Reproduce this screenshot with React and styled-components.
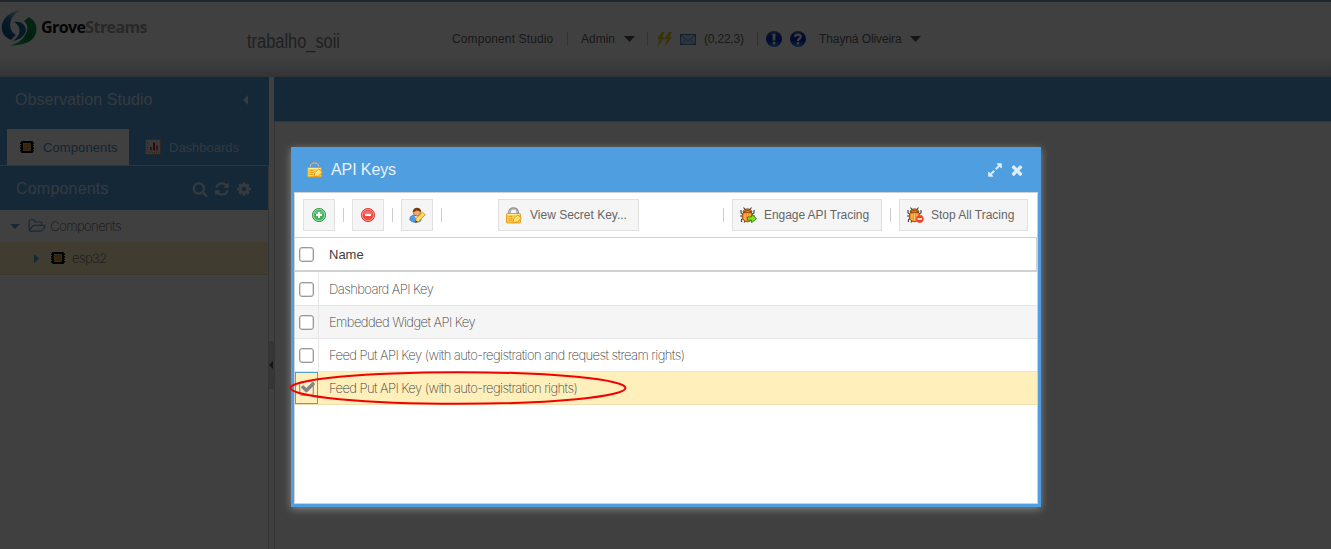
import React from "react";
import styled, { createGlobalStyle } from "styled-components";

const Global = createGlobalStyle`
  * { box-sizing: border-box; }
  body { margin: 0; background: #fff; font-family: "Liberation Sans", Arial, sans-serif; overflow: hidden; }
  svg { display: block; flex: none; }
`;

const Page = styled.div`
  position: relative;
  width: 1331px;
  height: 549px;
  display: flex;
  flex-direction: column;
  overflow: hidden;
  background: #fff;
`;
const TopBar = styled.header`
  height: 77px;
  flex: none;
  display: flex;
  align-items: flex-start;
  border-top: 2px solid #7aa0b8;
  background: linear-gradient(#fff 0, #fff 55px, #e4e6ec 66px, #c6cad6 75px);
`;
const Label = styled.span`
  display: block;
  flex: none;
  white-space: nowrap;
  width: ${(p) => p.$w}px;
  font-size: ${(p) => p.$size || 12}px;
  letter-spacing: ${(p) => p.$ls || 0}px;
  color: ${(p) => p.$color || "#666"};
  margin-left: ${(p) => p.$ml || 0}px;
`;
const Brand = styled.div`
  display: flex;
  width: 247px;
  padding: 5px 0 0 1px;
`;
const BrandName = styled.div`
  margin: 8px 0 0 4px;
  font: bold 16px/24px "Open Sans", sans-serif;
  letter-spacing: -0.6px;
  color: #111;
  span { color: #a0a0a0; }
`;
const OrgName = styled.div`
  width: 205px;
  padding-top: 28px;
  font-size: 20px;
  line-height: 23px;
  color: #808080;
  transform: scaleX(0.82);
  transform-origin: 0 0;
`;
const Nav = styled.nav`
  display: flex;
  align-items: center;
  height: 20px;
  margin-top: 27px;
`;
const Divider = styled.i`
  flex: none;
  width: 1px;
  height: 14px;
  background: #ccc;
  margin: 0 ${(p) => p.$r || 8}px 0 ${(p) => p.$l || 8}px;
`;
const Body = styled.div`
  flex: 1;
  display: flex;
`;
const Side = styled.aside`
  width: 269px;
  flex: none;
  border-right: 1px solid #cfcfcf;
`;
const StudioHead = styled.div`
  height: 52px;
  width: 269px;
  padding: 0 21px 6px 15px;
  display: flex;
  align-items: center;
  justify-content: space-between;
  background: #4f9ee0;
`;
const Tabs = styled.div`
  display: flex;
  width: 269px;
  height: 37px;
  padding-left: 7px;
  background: #4f9ee0;
  border-bottom: 1px solid #d0d0d0;
`;
const Tab = styled.div`
  display: flex;
  align-items: center;
  height: 36px;
  width: ${(p) => p.$w}px;
  padding-left: ${(p) => p.$pl}px;
  gap: 8px;
  background: ${(p) => (p.$active ? "#fff" : "transparent")};
`;
const PanelHead = styled.div`
  display: flex;
  align-items: center;
  height: 44px;
  padding: 1px 16px 0;
  background: #4f9ee0;
  gap: 6px;
`;
const TreeRow = styled.div`
  display: flex;
  align-items: center;
  height: ${(p) => p.$h}px;
  padding: 0 0 0 ${(p) => p.$pl}px;
  background: ${(p) => (p.$selected ? "#ffefbb" : "#fff")};
  border-bottom: ${(p) => (p.$selected ? "1px solid #e9dcae" : "0")};
`;
const Splitter = styled.div`
  width: 5px;
  flex: none;
  display: flex;
  align-items: center;
  padding-top: 104px;
  height: 472px;
`;
const SplitGrip = styled.div`
  width: 5px;
  height: 48px;
  display: flex;
  align-items: center;
  background: #d8d8d8;
`;
const Main = styled.main`
  flex: 1;
  border-left: 1px solid #cfcfcf;
`;
const MainHead = styled.div`
  height: 45px;
  margin-left: -1px;
  background: #4f9ee0;
  border-bottom: 1px solid #cfcfcf;
`;
const Mask = styled.div`
  position: absolute;
  inset: 0;
  background: rgba(0, 0, 0, 0.75);
`;
const Dialog = styled.section`
  position: absolute;
  left: 291px;
  top: 147px;
  width: 750px;
  height: 360px;
  display: flex;
  flex-direction: column;
  padding: 0 3px 3px;
  background: #4f9ee0;
  box-shadow: 0 2px 8px #888;
`;
const DialogHead = styled.div`
  display: flex;
  align-items: center;
  height: 45px;
  padding: 0 14px 0 13px;
  flex: none;
`;
const DialogBody = styled.div`
  flex: 1;
  background: #fff;
  border: 1px solid #d0d0d0;
`;
const Toolbar = styled.div`
  display: flex;
  align-items: center;
  height: 45px;
  padding-left: 8px;
  border-bottom: 1px solid #d0d0d0;
`;
const Button = styled.div`
  display: flex;
  flex: none;
  align-items: center;
  height: 32px;
  width: ${(p) => p.$w || 32}px;
  padding-left: 7px;
  gap: 7px;
  background: #f5f5f5;
  border: 1px solid #e0e0e0;
`;
const Gap = styled.div`
  flex: none;
  width: ${(p) => p.$w}px;
`;
const GridHead = styled.div`
  display: flex;
  align-items: center;
  height: 34px;
  padding: 1px 0 0 4px;
  border-right: 1px solid #d0d0d0;
  border-bottom: 2px solid #d0d0d0;
`;
const GridRows = styled.div`
  padding-top: 1px;
`;
const GridRow = styled.div`
  display: flex;
  height: 33px;
  background: ${(p) => p.$bg};
  border-bottom: 1px solid ${(p) => (p.$on ? "#eedfae" : "#e6e6e6")};
`;
const CheckCell = styled.div`
  width: ${(p) => (p.$on ? 23 : 24)}px;
  margin-right: ${(p) => (p.$on ? 1 : 0)}px;
  flex: none;
  display: flex;
  align-items: center;
  padding-left: ${(p) => (p.$on ? 3 : 4)}px;
  border: 1px solid transparent;
  border-width: ${(p) => (p.$on ? "1px" : "0 1px 0 0")};
  border-color: ${(p) => (p.$on ? "#4f9ee0" : "#e6e6e6")};
`;
const NameCell = styled.div`
  display: flex;
  align-items: center;
  padding-left: 10px;
`;
const Box = styled.div`
  flex: none;
  width: 15px;
  height: 15px;
  border: 1.5px solid #9a9a9a;
  box-shadow: inset 0 0 0 0.5px #b8b8b8;
  border-radius: 3px;
  background: ${(p) => (p.$on ? "transparent" : "#fff")};
`;
const Annotation = styled.svg`
  position: absolute;
  left: 286px;
  top: 368px;
`;

const GLYPHS = {
  search: "M1216 832q0-185-131.5-316.5t-316.5-131.5-316.5 131.5-131.5 316.5 131.5 316.5 316.5 131.5 316.5-131.5 131.5-316.5zm512 832q0 52-38 90t-90 38q-54 0-90-38l-343-342q-179 124-399 124-143 0-273.5-55.5t-225-150-150-225-55.5-273.5 55.5-273.5 150-225 225-150 273.5-55.5 273.5 55.5 225 150 150 225 55.5 273.5q0 220-124 399l343 343q37 37 37 90z",
  refresh: "M1639 1056q0 5-1 7-64 268-268 434.5t-478 166.5q-146 0-282.5-55t-243.5-157l-129 129q-19 19-45 19t-45-19-19-45v-448q0-26 19-45t45-19h448q26 0 45 19t19 45-19 45l-137 137q71 66 161 102t187 36q134 0 250-65t186-179q11-17 53-117 8-23 30-23h192q13 0 22.5 9.5t9.5 22.5zm25-800v448q0 26-19 45t-45 19h-448q-26 0-45-19t-19-45 19-45l138-138q-148-137-349-137-134 0-250 65t-186 179q-11 17-53 117-8 23-30 23h-199q-13 0-22.5-9.5t-9.5-22.5v-7q65-268 270-434.5t480-166.5q146 0 284 55.5t245 156.5l130-129q19-19 45-19t45 19 19 45z",
  cog: "M1152 896q0-106-75-181t-181-75-181 75-75 181 75 181 181 75 181-75 75-181zm512-109v222q0 12-8 23t-20 13l-185 28q-19 54-39 91 35 50 107 138 10 12 10 25t-9 23q-27 37-99 108t-94 71q-12 0-26-9l-138-108q-44 23-91 38-16 136-29 186-7 28-36 28h-222q-14 0-24.5-8.5t-11.5-21.5l-28-184q-49-16-90-37l-141 107q-10 9-25 9-14 0-25-11-126-114-165-168-7-10-7-23 0-12 8-23 15-21 51-66.5t54-70.5q-27-50-41-99l-183-27q-13-2-21-12.5t-8-23.5v-222q0-12 8-23t19-13l186-28q14-46 39-92-40-57-107-138-10-12-10-24 0-10 9-23 26-36 98.5-107.5t94.5-71.5q13 0 26 10l138 107q44-23 91-38 16-136 29-186 7-28 36-28h222q14 0 24.5 8.5t11.5 21.5l28 184q49 16 90 37l142-107q9-9 24-9 13 0 25 10 129 119 165 170 7 8 7 22 0 12-8 23-15 21-51 66.5t-54 70.5q26 50 41 98l183 28q13 2 21 12.5t8 23.5z",
  folder: "M1845 931q0-35-53-35h-1088q-40 0-85.5 21.5t-71.5 52.5l-294 363q-18 24-18 40 0 35 53 35h1088q40 0 86-22t71-53l294-363q18-22 18-39zm-1141-163h768v-160q0-40-28-68t-68-28h-576q-40 0-68-28t-28-68v-64q0-40-28-68t-68-28h-320q-40 0-68 28t-28 68v853l256-315q44-53 116-87.5t140-34.5zm1269 163q0 62-46 120l-295 363q-43 53-116 87.5t-140 34.5h-1088q-92 0-158-66t-66-158v-960q0-92 66-158t158-66h320q92 0 158 66t66 158v32h544q92 0 158 66t66 158v160h192q54 0 99 24.5t67 70.5q15 32 15 68z",
  expand: "M883 1056q0 13-10 23l-332 332 144 144q19 19 19 45t-19 45-45 19h-448q-26 0-45-19t-19-45v-448q0-26 19-45t45-19 45 19l144 144 332-332q10-10 23-10t23 10l114 114q10 10 10 23zm781-864v448q0 26-19 45t-45 19-45-19l-144-144-332 332q-10 10-23 10t-23-10l-114-114q-10-10-10-23t10-23l332-332-144-144q-19-19-19-45t19-45 45-19h448q26 0 45 19t19 45z",
  close: "M1490 1322q0 40-28 68l-136 136q-28 28-68 28t-68-28l-294-294-294 294q-28 28-68 28t-68-28l-136-136q-28-28-28-68t28-68l294-294-294-294q-28-28-28-68t28-68l136-136q28-28 68-28t68 28l294 294 294-294q28-28 68-28t68 28l136 136q28 28 28 68t-28 68l-294 294 294 294q28 28 28 68z",
  check: "M1671 566q0 40-28 68l-724 724-136 136q-28 28-68 28t-68-28l-136-136-362-362q-28-28-28-68t28-68l136-136q28-28 68-28t68 28l294 295 656-657q28-28 68-28t68 28l136 136q28 28 28 68z",
};
const Glyph = ({ name, size = 16, color, wide }) => (
  <svg width={wide ? (size * 2048) / 1792 : size} height={size} viewBox={`0 0 ${wide ? 2048 : 1792} 1792`} fill={color}>
    <path d={GLYPHS[name]} />
  </svg>
);
const Pointer = ({ w, h, dir, color }) => {
  const pts = { down: `0,0 ${w},0 ${w / 2},${h}`, left: `${w},0 ${w},${h} 0,${h / 2}`, right: `0,0 ${w},${h / 2} 0,${h}` }[dir];
  return <svg width={w} height={h} fill={color}><polygon points={pts} /></svg>;
};

const Logo = () => (
  <svg width="36" height="42" viewBox="0 0 36 42">
    <defs>
      <linearGradient id="lb" x1="0" y1="1" x2=".8" y2="0"><stop offset="0" stopColor="#0a3f78" /><stop offset=".5" stopColor="#1a70a8" /><stop offset=".8" stopColor="#8fb8cf" /><stop offset="1" stopColor="#fff" /></linearGradient>
      <linearGradient id="lg" x1="0" y1="1" x2=".7" y2="0"><stop offset="0" stopColor="#3cc86a" /><stop offset=".5" stopColor="#00803c" /><stop offset="1" stopColor="#109a50" /></linearGradient>
    </defs>
    <path d="M25 2C11 3 .8 10 .8 21c0 5 3 9 9 12l5-5C10 25 8.500 20 9.500 15 11 9 16 4 25 2z" fill="url(#lb)" />
    <path d="M13 15c4-1 8 0 10 3 3 4 2 8-1 11-3 3-6 4-10 5 5-4 7-7 6.500-11-.5-4-2.500-6-5.500-8z" fill="#17689a" />
    <path d="M23 14l5-4c5 3 7.500 7 7.500 12 0 10-9 17-27 16.500 7-2 12-4.500 15-9.500 4-6 4-11-.5-15z" fill="url(#lg)" />
  </svg>
);
const Bolts = () => (
  <svg width="15" height="14" viewBox="0 0 15 14" fill="#e6d200" stroke="#b8a600" strokeWidth=".4">
    <path d="M4.800.3L.6 6.800h2.700L.9 13.600 7.300 5.600H4.800L7.200.3z" />
    <path d="M12 .3L7.800 6.800h2.700l-2.400 6.800 6.500-8H12L14.400.3z" />
  </svg>
);
const Mail = () => (
  <svg width="16" height="11" viewBox="0 0 16 11" fill="#b9d4f1" stroke="#4d83bb">
    <rect x=".5" y=".5" width="15" height="10" /><path d="M1 1l7 6 7-6M1 10l5-4.500M15 10l-5-4.500" fill="none" strokeWidth=".8" />
  </svg>
);
const Info = ({ kind }) => (
  <svg width="16" height="16" viewBox="0 0 16 16">
    <defs><linearGradient id="inf" x2="0" y2="1"><stop stopColor="#5068b8" /><stop offset=".3" stopColor="#1538b0" /><stop offset=".6" stopColor="#0a2fc0" /><stop offset="1" stopColor="#3f8cf0" /></linearGradient></defs>
    <circle cx="8" cy="8" r="8" fill="url(#inf)" />
    {kind === "alert"
      ? <path d="M6.400 2.800h3.200L9.200 9.600H6.800zM6.700 10.800h2.600v2.600H6.700z" fill="#fff" />
      : <g fill="none" stroke="#fff" strokeWidth="2.300"><path d="M5.200 5.900C5.300 2.900 10.800 2.900 10.700 5.800 10.600 7.500 8 7.700 8 10" /><path d="M8 11.100v2.300" /></g>}
  </svg>
);
const Chip = () => (
  <svg width="14" height="12" viewBox="0 0 14 12">
    <rect x="1" y="0" width="12" height="12" rx="1" fill="#000" /><path d="M.5 1.500v9.500M13.500 1.500v9.500" stroke="#000" strokeDasharray="1.500 1" />
    <rect x="3.500" y="2.500" width="7" height="7" fill="#d98f38" stroke="#f2c98d" strokeWidth=".8" />
  </svg>
);
const ChartIcon = () => (
  <svg width="16" height="16" viewBox="0 0 16 16">
    <rect x=".5" y=".5" width="15" height="15" fill="#e6e4e6" stroke="#a99a94" />
    <path d="M2.500 2v11.500H14" stroke="#a89c9c" fill="none" strokeDasharray="1 1" />
    <path d="M5 11.500V8h1.500v3.500zM8 11.500V3.500h2v8zM11.200 11.500V6.500h1.500v5z" fill="#c81c2c" />
  </svg>
);
const LockIcon = () => (
  <svg width="16" height="17" viewBox="0 0 16 17">
    <path d="M3.300 7.500V5.500C3.300 0 11.800 0 11.800 5.500v2" fill="none" stroke="#8c8c8c" strokeWidth="2.400" />
    <path d="M3.300 7V5.500C3.300.700 11.500.700 11.800 5.500" fill="none" stroke="#d0d0d0" strokeWidth=".8" />
    <rect x=".6" y="6.600" width="13.800" height="9.300" rx=".6" fill="#fbd04b" stroke="#e39a19" />
    <path d="M1.500 7.500h12" stroke="#ffed96" /><path d="M2.500 9.500h4M2.500 11.500h4M2.500 13.500h4" stroke="#e2a125" strokeWidth=".9" />
    <path d="M7 15.700l.8-4 4-3.700 3.700 3.200-4 3.800z" fill="#ffe267" stroke="#d88b15" strokeWidth=".8" /><path d="M8.800 12l3-2.700" stroke="#fff5bd" />
  </svg>
);
const RoundIcon = ({ add }) => (
  <svg width="16" height="16" viewBox="0 0 16 16">
    <circle cx="8" cy="8" r="6.600" fill={add ? "#43b45c" : "#f2483f"} stroke={add ? "#2d9447" : "#cf3935"} strokeWidth=".9" />
    <circle cx="8" cy="8" r="5.700" fill="none" stroke={add ? "#a8e6b2" : "#ffaaa2"} strokeWidth=".8" />
    <path d="M3.500 7C4 2.700 12 2.700 12.500 7z" fill="#fff" opacity=".22" />
    <path d={add ? "M8 5v6M5 8h6" : "M5 8h6"} stroke="#fff" strokeWidth="2" />
  </svg>
);
const UserEdit = () => (
  <svg width="17" height="16" viewBox="0 0 17 16">
    <path d="M.8 13c0-4 2-5 6-5s6 2 5 6c-3 2-8 2-11-1z" fill="#4d9be8" stroke="#2c69b0" strokeWidth=".6" />
    <path d="M5.500 9l3 5 2-5z" fill="#e8f4ff" />
    <circle cx="8" cy="5.300" r="3.800" fill="#f0aa68" stroke="#8b4a1c" strokeWidth=".6" />
    <path d="M3.700 5C4-.8 12-.8 12.300 5 10 4.500 9 3.500 7.500 3.500 6 4.500 5 5 3.700 5z" fill="#7a3c13" />
    <path d="M6 15.500l1-4 6.500-6.300 2.800 2.500-6.500 6.800z" fill="#ffdb57" stroke="#bd7a14" strokeWidth=".7" /><path d="M6 15.500l.7-2.400 2 1.900z" fill="#5b3820" />
  </svg>
);
const BugIcon = ({ stop }) => (
  <svg width="17" height="16" viewBox="0 0 17 16">
    <path d="M3.500.5L5.500 3M11.500.5L9.500 3M1 3v3l3 1.500M14 3v3l-3 1.500M0 9H4M15 9H11M4 11l-2.500 1.500V15M5 14l-1 1.500" fill="none" stroke="#3b4a55" strokeWidth="1.200" />
    <path d="M3 5C3.500.8 11.500.8 12 5z" fill="#d87018" stroke="#6c3510" strokeWidth=".7" />
    <ellipse cx="7.500" cy="9.200" rx="5.400" ry="5.600" fill="#f58a1f" stroke="#7d3a0c" strokeWidth=".8" />
    <path d="M3 5.500h9" stroke="#7d3a0c" strokeWidth=".7" />
    <path d="M7.500 6.500v7M5 7v6M10 7v6" stroke="#ffd27a" strokeWidth=".9" />
    {stop
      ? <g><circle cx="12.800" cy="12" r="3.700" fill="#ef3f28" stroke="#e06a50" strokeWidth=".6" /><path d="M10.600 12h4.400" stroke="#fff" strokeWidth="1.500" /></g>
      : <path d="M7.500 9.900h4V7.400l5 4.200-5 4.100v-2.500h-4z" fill="#7be32a" stroke="#26840d" strokeWidth=".9" />}
  </svg>
);

const KeyText = styled(Label)`
  font-family: Inter, "Liberation Sans", sans-serif;
  font-weight: 200;
  letter-spacing: -0.57px;
`;

const KEYS = [
  { name: "Dashboard API Key", bg: "#fff", w: 106 },
  { name: "Embedded Widget API Key", bg: "#f5f5f5", w: 148 },
  { name: "Feed Put API Key (with auto-registration and request stream rights)", bg: "#fff", w: 356 },
  { name: "Feed Put API Key (with auto-registration rights)", bg: "#ffefbb", w: 248, on: true },
];
const CheckMark = styled.div`
  margin-left: -14px;
  margin-top: -3px;
`;

export default function App() {
  return (
    <Page>
      <Global />
      <TopBar>
        <Brand><Logo /><BrandName>Grove<span>Streams</span></BrandName></Brand>
        <OrgName>trabalho_soii</OrgName>
        <Nav>
          <Label $w={102} $ls={0.12}>Component Studio</Label>
          <Divider $l={13} $r={13} />
          <Label $w={43}>Admin</Label>
          <Pointer w={11} h={6} dir="down" color="#555" />
          <Divider $l={12} $r={9} />
          <Bolts /><Gap $w={8} /><Mail />
          <Label $w={40} $ml={8} $ls={-0.2}>(0,22,3)</Label>
          <Divider $l={13} $r={8} />
          <Info kind="alert" /><Gap $w={8} /><Info kind="help" />
          <Label $w={91} $ml={13} $ls={-0.1}>Thayná Oliveira</Label>
          <Pointer w={11} h={6} dir="down" color="#555" />
        </Nav>
      </TopBar>
      <Body>
        <Side>
          <StudioHead>
            <Label $w={140} $size={16} $ls={0.08} $color="#d3e5f6">Observation Studio</Label>
            <Pointer w={5} h={10} dir="left" color="#d3e5f6" />
          </StudioHead>
          <Tabs>
            <Tab $active $w={122} $pl={13}><Chip /><Label $w={76} $size={13} $ls={0.1} $color="#4f90c8" $ml={1}>Components</Label></Tab>
            <Tab $w={130} $pl={16}><ChartIcon /><Label $w={72} $size={13} $color="#c5dff5">Dashboards</Label></Tab>
          </Tabs>
          <PanelHead>
            <Label $w={170} $size={16} $ls={0.2} $color="#d3e5f6">Components</Label>
            <Glyph name="search" color="#d3e5f6" /><Glyph name="refresh" color="#d3e5f6" /><Glyph name="cog" color="#d3e5f6" />
          </PanelHead>
          <TreeRow $h={32} $pl={10}>
            <Pointer w={10} h={5} dir="down" color="#4f9ee0" /><Gap $w={8} />
            <Glyph name="folder" wide color="#4f9ee0" />
            <KeyText $size={13} $color="#555" $ml={4} $w={72}>Components</KeyText>
          </TreeRow>
          <TreeRow $h={33} $pl={34} $selected>
            <Pointer w={5} h={9} dir="right" color="#4f9ee0" /><Gap $w={12} /><Chip />
            <KeyText $size={13} $color="#555" $ml={7} $w={36}>esp32</KeyText>
          </TreeRow>
        </Side>
        <Splitter><SplitGrip><Pointer w={4} h={8} dir="left" color="#555" /></SplitGrip></Splitter>
        <Main><MainHead /></Main>
      </Body>
      <Mask />
      <Dialog>
        <DialogHead>
          <LockIcon />
          <Label $w={656} $size={16} $ls={-0.1} $color="#e8f2fb" $ml={8}>API Keys</Label>
          <Glyph name="expand" color="#dcecf9" /><Gap $w={6} /><Glyph name="close" color="#dcecf9" />
        </DialogHead>
        <DialogBody>
          <Toolbar>
            <Button><RoundIcon add /></Button>
            <Divider />
            <Button><RoundIcon /></Button>
            <Divider />
            <Button><UserEdit /></Button>
            <Divider $r={56} />
            <Button $w={141}><LockIcon /><Label $w={98} $ml={1}>View Secret Key...</Label></Button>
            <Gap $w={76} /><Divider />
            <Button $w={150}><BugIcon /><Label $w={106} $ls={-0.06}>Engage API Tracing</Label></Button>
            <Divider />
            <Button $w={129}><BugIcon stop /><Label $w={86}>Stop All Tracing</Label></Button>
          </Toolbar>
          <GridHead><Box /><Label $w={40} $size={13} $color="#404040" $ml={15}>Name</Label></GridHead>
          <GridRows>
            {KEYS.map((k) => (
              <GridRow key={k.name} $bg={k.bg} $on={k.on}>
                <CheckCell $on={k.on}><Box $on={k.on} />{k.on && <CheckMark><Glyph name="check" size={16} color="#858585" /></CheckMark>}</CheckCell>
                <NameCell><KeyText $w={k.w} $size={13} $color="#444">{k.name}</KeyText></NameCell>
              </GridRow>
            ))}
          </GridRows>
        </DialogBody>
      </Dialog>
      <Annotation width="344" height="40"><ellipse cx="172" cy="20" rx="167.500" ry="15.800" fill="none" stroke="#f40000" strokeWidth="2" /></Annotation>
    </Page>
  );
}
